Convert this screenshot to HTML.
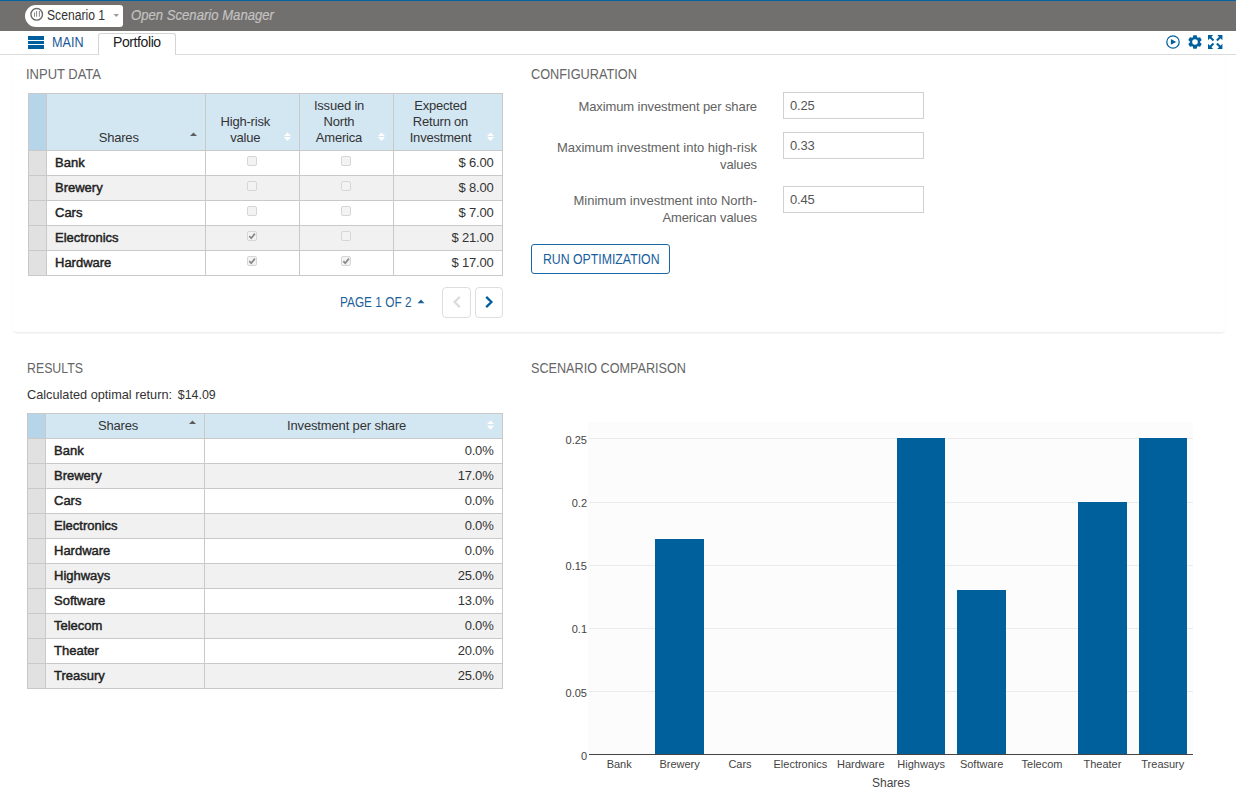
<!DOCTYPE html>
<html><head><meta charset="utf-8">
<style>
*{box-sizing:border-box}
html,body{margin:0;padding:0;width:1236px;height:795px;overflow:hidden;background:#fff;font-family:"Liberation Sans",sans-serif;color:#333}
.a{position:absolute}
.t{position:absolute;white-space:nowrap;line-height:1}
.h2{font-size:13px;color:#666}
.cb{width:10px;height:10px;border:1px solid #d6d6d6;border-radius:2px;background:#f3f3f3}
.b{font-weight:bold}
</style></head><body>

<div class="a" style="left:0px;top:0px;width:1236px;height:1px;background:#0563a2"></div>
<div class="a" style="left:0px;top:1px;width:1236px;height:30px;background:#72706e"></div>
<div class="a" style="left:25px;top:5px;width:98px;height:22px;background:#fff;border-radius:11px 3px 3px 11px"></div>
<svg class="a" style="left:29px;top:7px" width="16" height="15" viewBox="0 0 16 15">
<circle cx="7.7" cy="7.3" r="5.8" fill="none" stroke="#6a6a6a" stroke-width="1.4"/>
<rect x="5" y="5.5" width="1" height="4.2" fill="#8a8a8a"/>
<rect x="7.1" y="4" width="1" height="5.7" fill="#8a8a8a"/>
<rect x="9.9" y="4" width="1" height="5.7" fill="#8a8a8a"/>
</svg>
<div class="t" style="left:46.5px;top:8.05px;font-size:14px;color:#333;;transform:scaleX(0.8665);transform-origin:0 0">Scenario 1</div>
<svg class="a" style="left:113px;top:13px" width="7" height="5"><path d="M0.5 1 L6 1 L3.25 4 Z" fill="#999"/></svg>
<div class="t" style="left:130.5px;top:7.75px;font-size:14px;color:#c2c2c2;font-style:italic;-webkit-text-stroke:0.2px #c2c2c2;transform:scaleX(0.9374);transform-origin:0 0">Open Scenario Manager</div>
<div class="a" style="left:0px;top:54px;width:1236px;height:1px;background:#dcdcdc"></div>
<div class="a" style="left:28px;top:36px;width:16px;height:3.5px;background:#005e9d"></div>
<div class="a" style="left:28px;top:41px;width:16px;height:3.2px;background:#005e9d"></div>
<div class="a" style="left:28px;top:45.4px;width:16px;height:3.3px;background:#005e9d"></div>
<div class="t" style="left:52px;top:34.95px;font-size:14px;color:#1b5a97;;transform:scaleX(0.9000);transform-origin:0 0">MAIN</div>
<div class="a" style="left:98px;top:33px;width:78px;height:22px;background:#fff;border:1px solid #d4d4d4;border-bottom:none;border-radius:3px 3px 0 0"></div>
<div class="t" style="left:113px;top:35.15px;font-size:14px;color:#222;letter-spacing:-0.4px">Portfolio</div>
<svg class="a" style="left:1165.2px;top:33.9px" width="16" height="16" viewBox="0 0 16 16">
<circle cx="8" cy="8" r="6.2" fill="none" stroke="#00609c" stroke-width="1.25"/>
<path d="M5.9 5.1 L11.2 7.95 L5.9 10.8 Z" fill="#00609c"/></svg>
<svg class="a" style="left:1186.9px;top:33.9px" width="16" height="16" viewBox="-8 -8 16 16">
<path fill="#00609c" fill-rule="evenodd" d="M-2.27 -4.46 L-1.69 -6.79 L1.69 -6.79 L2.27 -4.46 L2.72 -4.19 L5.04 -4.86 L6.73 -1.93 L4.99 -0.26 L4.99 0.26 L6.73 1.93 L5.04 4.86 L2.72 4.19 L2.27 4.46 L1.69 6.79 L-1.69 6.79 L-2.27 4.46 L-2.72 4.19 L-5.04 4.86 L-6.73 1.93 L-4.99 0.26 L-4.99 -0.26 L-6.73 -1.93 L-5.04 -4.86 L-2.72 -4.19 Z M0 -2.8 A2.8 2.8 0 1 0 0 2.8 A2.8 2.8 0 1 0 0 -2.8 Z"/></svg>
<svg class="a" style="left:1208.2px;top:34.8px" width="15" height="15" viewBox="0 0 15 15">
<g fill="#00609c"><path d="M0 0 L5.2 0 L0 5.2 Z M14.4 0 L9.2 0 L14.4 5.2 Z M0 14.05 L5.2 14.05 L0 8.85 Z M14.4 14.05 L9.2 14.05 L14.4 8.85 Z"/></g>
<g stroke="#00609c" stroke-width="2.1"><path d="M1.5 1.5 L5.5 5.5 M12.9 1.5 L8.9 5.5 M1.5 12.55 L5.5 8.55 M12.9 12.55 L8.9 8.55"/></g></svg>
<div class="a" style="left:12px;top:55px;width:1214px;height:278px;border:1px solid #fcfcfc;border-top:none;border-bottom:1px solid #efefef;border-radius:0 0 5px 5px;box-shadow:0 1px 1px #f6f6f6"></div>
<div class="t" style="left:26px;top:67.05px;font-size:14px;color:#666;;transform:scaleX(0.9270);transform-origin:0 0">INPUT DATA</div>
<div class="t" style="left:531px;top:66.85px;font-size:14px;color:#666;;transform:scaleX(0.9106);transform-origin:0 0">CONFIGURATION</div>
<div class="t" style="left:26.5px;top:360.75px;font-size:14px;color:#666;;transform:scaleX(0.8812);transform-origin:0 0">RESULTS</div>
<div class="t" style="left:530.7px;top:360.65px;font-size:14px;color:#666;;transform:scaleX(0.9030);transform-origin:0 0">SCENARIO COMPARISON</div>
<div class="a" style="left:29px;top:94px;width:17px;height:56px;background:#b7d5e9"></div>
<div class="a" style="left:47px;top:94px;width:455px;height:56px;background:#d3e7f3"></div>
<div class="a" style="left:29px;top:151px;width:17px;height:24px;background:#e1e1e1"></div>
<div class="a" style="left:47px;top:151px;width:455px;height:24px;background:#fff"></div>
<div class="a" style="left:29px;top:176px;width:17px;height:24px;background:#e1e1e1"></div>
<div class="a" style="left:47px;top:176px;width:455px;height:24px;background:#f1f1f1"></div>
<div class="a" style="left:29px;top:201px;width:17px;height:24px;background:#e1e1e1"></div>
<div class="a" style="left:47px;top:201px;width:455px;height:24px;background:#fff"></div>
<div class="a" style="left:29px;top:226px;width:17px;height:24px;background:#e1e1e1"></div>
<div class="a" style="left:47px;top:226px;width:455px;height:24px;background:#f1f1f1"></div>
<div class="a" style="left:29px;top:251px;width:17px;height:24px;background:#e1e1e1"></div>
<div class="a" style="left:47px;top:251px;width:455px;height:24px;background:#fff"></div>
<div class="a" style="left:28px;top:93px;width:1px;height:183px;background:#c9c9c9"></div>
<div class="a" style="left:46px;top:93px;width:1px;height:183px;background:#c9c9c9"></div>
<div class="a" style="left:205px;top:93px;width:1px;height:183px;background:#c9c9c9"></div>
<div class="a" style="left:299px;top:93px;width:1px;height:183px;background:#c9c9c9"></div>
<div class="a" style="left:393px;top:93px;width:1px;height:183px;background:#c9c9c9"></div>
<div class="a" style="left:502px;top:93px;width:1px;height:183px;background:#c9c9c9"></div>
<div class="a" style="left:28px;top:93px;width:475px;height:1px;background:#c9c9c9"></div>
<div class="a" style="left:28px;top:150px;width:475px;height:1px;background:#c9c9c9"></div>
<div class="a" style="left:28px;top:175px;width:475px;height:1px;background:#c9c9c9"></div>
<div class="a" style="left:28px;top:200px;width:475px;height:1px;background:#c9c9c9"></div>
<div class="a" style="left:28px;top:225px;width:475px;height:1px;background:#c9c9c9"></div>
<div class="a" style="left:28px;top:250px;width:475px;height:1px;background:#c9c9c9"></div>
<div class="a" style="left:28px;top:275px;width:475px;height:1px;background:#c9c9c9"></div>
<div class="t" style="left:-81.3px;width:400px;text-align:center;top:130.80px;font-size:13px;color:#333;letter-spacing:-0.2px">Shares</div>
<svg class="a" style="left:190px;top:132px" width="8" height="5" viewBox="0 0 8 5"><path d="M0 3.9 L3.5 0.6 L7 3.9 Z" fill="#5c5c5c"/></svg>
<div class="t" style="left:45.30000000000001px;width:400px;text-align:center;top:114.90px;font-size:13px;color:#333;letter-spacing:-0.2px">High-risk</div>
<div class="t" style="left:45.30000000000001px;width:400px;text-align:center;top:130.80px;font-size:13px;color:#333;letter-spacing:-0.2px">value</div>
<svg class="a" style="left:284px;top:132px" width="8" height="11" viewBox="0 0 8 11"><path d="M0 3.9 L3.5 0.5 L7 3.9 Z M0 4.9 L3.5 9.0 L7 4.9 Z" fill="#fff"/></svg>
<div class="t" style="left:139px;width:400px;text-align:center;top:99.00px;font-size:13px;color:#333;letter-spacing:-0.2px">Issued in</div>
<div class="t" style="left:139px;width:400px;text-align:center;top:115.00px;font-size:13px;color:#333;letter-spacing:-0.2px">North</div>
<div class="t" style="left:139px;width:400px;text-align:center;top:131.00px;font-size:13px;color:#333;letter-spacing:-0.2px">America</div>
<svg class="a" style="left:378px;top:132px" width="8" height="11" viewBox="0 0 8 11"><path d="M0 3.9 L3.5 0.5 L7 3.9 Z M0 4.9 L3.5 9.0 L7 4.9 Z" fill="#fff"/></svg>
<div class="t" style="left:240.5px;width:400px;text-align:center;top:98.80px;font-size:13px;color:#333;letter-spacing:-0.2px">Expected</div>
<div class="t" style="left:240.5px;width:400px;text-align:center;top:114.80px;font-size:13px;color:#333;letter-spacing:-0.2px">Return on</div>
<div class="t" style="left:240.5px;width:400px;text-align:center;top:130.80px;font-size:13px;color:#333;letter-spacing:-0.2px">Investment</div>
<svg class="a" style="left:487px;top:132px" width="8" height="11" viewBox="0 0 8 11"><path d="M0 3.9 L3.5 0.5 L7 3.9 Z M0 4.9 L3.5 9.0 L7 4.9 Z" fill="#fff"/></svg>
<div class="t" style="left:55px;top:155.80px;font-size:13px;color:#222;-webkit-text-stroke:0.45px #222">Bank</div>
<div class="a cb" style="left:247px;top:156px"></div>
<div class="a cb" style="left:341px;top:156px"></div>
<div class="t" style="right:742.5px;top:155.70px;font-size:13px;color:#333;letter-spacing:-0.2px">$ 6.00</div>
<div class="t" style="left:55px;top:180.80px;font-size:13px;color:#222;-webkit-text-stroke:0.45px #222">Brewery</div>
<div class="a cb" style="left:247px;top:181px"></div>
<div class="a cb" style="left:341px;top:181px"></div>
<div class="t" style="right:742.5px;top:180.70px;font-size:13px;color:#333;letter-spacing:-0.2px">$ 8.00</div>
<div class="t" style="left:55px;top:205.80px;font-size:13px;color:#222;-webkit-text-stroke:0.45px #222">Cars</div>
<div class="a cb" style="left:247px;top:206px"></div>
<div class="a cb" style="left:341px;top:206px"></div>
<div class="t" style="right:742.5px;top:205.70px;font-size:13px;color:#333;letter-spacing:-0.2px">$ 7.00</div>
<div class="t" style="left:55px;top:230.80px;font-size:13px;color:#222;-webkit-text-stroke:0.45px #222">Electronics</div>
<div class="a cb" style="left:247px;top:231px"></div>
<svg class="a" style="left:247px;top:231px" width="10" height="10" viewBox="0 0 10 10"><path d="M2.3 5.2 L4.2 7.2 L7.9 2.6" fill="none" stroke="#8a8a8a" stroke-width="1.7"/></svg>
<div class="a cb" style="left:341px;top:231px"></div>
<div class="t" style="right:742.5px;top:230.70px;font-size:13px;color:#333;letter-spacing:-0.2px">$ 21.00</div>
<div class="t" style="left:55px;top:255.80px;font-size:13px;color:#222;-webkit-text-stroke:0.45px #222">Hardware</div>
<div class="a cb" style="left:247px;top:256px"></div>
<svg class="a" style="left:247px;top:256px" width="10" height="10" viewBox="0 0 10 10"><path d="M2.3 5.2 L4.2 7.2 L7.9 2.6" fill="none" stroke="#8a8a8a" stroke-width="1.7"/></svg>
<div class="a cb" style="left:341px;top:256px"></div>
<svg class="a" style="left:341px;top:256px" width="10" height="10" viewBox="0 0 10 10"><path d="M2.3 5.2 L4.2 7.2 L7.9 2.6" fill="none" stroke="#8a8a8a" stroke-width="1.7"/></svg>
<div class="t" style="right:742.5px;top:255.70px;font-size:13px;color:#333;letter-spacing:-0.2px">$ 17.00</div>
<div class="t" style="left:340.3px;top:295.05px;font-size:14px;color:#1d5f99;;transform:scaleX(0.8457);transform-origin:0 0">PAGE 1 OF 2</div>
<svg class="a" style="left:417px;top:299px" width="8" height="5" viewBox="0 0 8 5"><path d="M0.5 4.3 L4 0.5 L7.5 4.3 Z" fill="#1d5f99"/></svg>
<div class="a" style="left:442px;top:287px;width:29px;height:31px;border:1px solid #dedede;border-radius:4px"></div>
<div class="a" style="left:475px;top:287px;width:28px;height:31px;border:1px solid #dedede;border-radius:4px"></div>
<svg class="a" style="left:452px;top:296px" width="10" height="12" viewBox="0 0 10 12"><path d="M7.8 0.9 L2.6 6 L7.8 11.1" fill="none" stroke="#dcdcdc" stroke-width="2.3"/></svg>
<svg class="a" style="left:484px;top:296px" width="10" height="12" viewBox="0 0 10 12"><path d="M2.2 0.9 L7.4 6 L2.2 11.1" fill="none" stroke="#005e9e" stroke-width="2.3"/></svg>
<div class="t" style="right:479px;top:100.00px;font-size:13px;color:#626262;letter-spacing:-0.1px">Maximum investment per share</div>
<div class="t" style="right:479px;top:140.50px;font-size:13px;color:#626262;letter-spacing:0px">Maximum investment into high-risk</div>
<div class="t" style="right:479px;top:157.50px;font-size:13px;color:#626262;letter-spacing:-0.1px">values</div>
<div class="t" style="right:479px;top:194.30px;font-size:13px;color:#626262;letter-spacing:0px">Minimum investment into North-</div>
<div class="t" style="right:479px;top:211.00px;font-size:13px;color:#626262;letter-spacing:-0.1px">American values</div>
<div class="a" style="left:783px;top:92px;width:141px;height:27px;border:1px solid #d0d0d0;background:#fff"></div>
<div class="t" style="left:790px;top:99.20px;font-size:13px;color:#555;letter-spacing:-0.2px">0.25</div>
<div class="a" style="left:783px;top:132px;width:141px;height:27px;border:1px solid #d0d0d0;background:#fff"></div>
<div class="t" style="left:790px;top:139.20px;font-size:13px;color:#555;letter-spacing:-0.2px">0.33</div>
<div class="a" style="left:783px;top:186px;width:141px;height:27px;border:1px solid #d0d0d0;background:#fff"></div>
<div class="t" style="left:790px;top:193.20px;font-size:13px;color:#555;letter-spacing:-0.2px">0.45</div>
<div class="a" style="left:531px;top:244px;width:139px;height:30px;border:1px solid #1a69a6;border-radius:3px"></div>
<div class="t" style="left:542.6px;top:252.15px;font-size:14px;color:#185e9c;;transform:scaleX(0.8777);transform-origin:0 0">RUN OPTIMIZATION</div>
<div class="t" style="left:26.5px;top:387.80px;font-size:13px;color:#333;;transform:scaleX(0.9788);transform-origin:0 0">Calculated optimal return:</div>
<div class="t" style="right:1020px;top:387.80px;font-size:13px;color:#333;;transform:scaleX(0.9556);transform-origin:100% 0">$14.09</div>
<div class="a" style="left:28px;top:414px;width:17px;height:24px;background:#b7d5e9"></div>
<div class="a" style="left:46px;top:414px;width:456px;height:24px;background:#d3e7f3"></div>
<div class="a" style="left:28px;top:439px;width:17px;height:24px;background:#e1e1e1"></div>
<div class="a" style="left:46px;top:439px;width:456px;height:24px;background:#fff"></div>
<div class="a" style="left:28px;top:464px;width:17px;height:24px;background:#e1e1e1"></div>
<div class="a" style="left:46px;top:464px;width:456px;height:24px;background:#f1f1f1"></div>
<div class="a" style="left:28px;top:489px;width:17px;height:24px;background:#e1e1e1"></div>
<div class="a" style="left:46px;top:489px;width:456px;height:24px;background:#fff"></div>
<div class="a" style="left:28px;top:514px;width:17px;height:24px;background:#e1e1e1"></div>
<div class="a" style="left:46px;top:514px;width:456px;height:24px;background:#f1f1f1"></div>
<div class="a" style="left:28px;top:539px;width:17px;height:24px;background:#e1e1e1"></div>
<div class="a" style="left:46px;top:539px;width:456px;height:24px;background:#fff"></div>
<div class="a" style="left:28px;top:564px;width:17px;height:24px;background:#e1e1e1"></div>
<div class="a" style="left:46px;top:564px;width:456px;height:24px;background:#f1f1f1"></div>
<div class="a" style="left:28px;top:589px;width:17px;height:24px;background:#e1e1e1"></div>
<div class="a" style="left:46px;top:589px;width:456px;height:24px;background:#fff"></div>
<div class="a" style="left:28px;top:614px;width:17px;height:24px;background:#e1e1e1"></div>
<div class="a" style="left:46px;top:614px;width:456px;height:24px;background:#f1f1f1"></div>
<div class="a" style="left:28px;top:639px;width:17px;height:24px;background:#e1e1e1"></div>
<div class="a" style="left:46px;top:639px;width:456px;height:24px;background:#fff"></div>
<div class="a" style="left:28px;top:664px;width:17px;height:24px;background:#e1e1e1"></div>
<div class="a" style="left:46px;top:664px;width:456px;height:24px;background:#f1f1f1"></div>
<div class="a" style="left:27px;top:413px;width:1px;height:276px;background:#c9c9c9"></div>
<div class="a" style="left:45px;top:413px;width:1px;height:276px;background:#c9c9c9"></div>
<div class="a" style="left:204px;top:413px;width:1px;height:276px;background:#c9c9c9"></div>
<div class="a" style="left:502px;top:413px;width:1px;height:276px;background:#c9c9c9"></div>
<div class="a" style="left:27px;top:413px;width:476px;height:1px;background:#c9c9c9"></div>
<div class="a" style="left:27px;top:438px;width:476px;height:1px;background:#c9c9c9"></div>
<div class="a" style="left:27px;top:463px;width:476px;height:1px;background:#c9c9c9"></div>
<div class="a" style="left:27px;top:488px;width:476px;height:1px;background:#c9c9c9"></div>
<div class="a" style="left:27px;top:513px;width:476px;height:1px;background:#c9c9c9"></div>
<div class="a" style="left:27px;top:538px;width:476px;height:1px;background:#c9c9c9"></div>
<div class="a" style="left:27px;top:563px;width:476px;height:1px;background:#c9c9c9"></div>
<div class="a" style="left:27px;top:588px;width:476px;height:1px;background:#c9c9c9"></div>
<div class="a" style="left:27px;top:613px;width:476px;height:1px;background:#c9c9c9"></div>
<div class="a" style="left:27px;top:638px;width:476px;height:1px;background:#c9c9c9"></div>
<div class="a" style="left:27px;top:663px;width:476px;height:1px;background:#c9c9c9"></div>
<div class="a" style="left:27px;top:688px;width:476px;height:1px;background:#c9c9c9"></div>
<div class="t" style="left:-82px;width:400px;text-align:center;top:418.80px;font-size:13px;color:#333;letter-spacing:-0.2px">Shares</div>
<svg class="a" style="left:189px;top:420px" width="8" height="5" viewBox="0 0 8 5"><path d="M0 3.9 L3.5 0.6 L7 3.9 Z" fill="#5c5c5c"/></svg>
<div class="t" style="left:146.60000000000002px;width:400px;text-align:center;top:418.80px;font-size:13px;color:#333;letter-spacing:-0.15px">Investment per share</div>
<svg class="a" style="left:487px;top:420px" width="8" height="11" viewBox="0 0 8 11"><path d="M0 3.9 L3.5 0.5 L7 3.9 Z M0 5.7 L3.5 9.8 L7 5.7 Z" fill="#fff"/></svg>
<div class="t" style="left:54px;top:443.60px;font-size:13px;color:#222;-webkit-text-stroke:0.45px #222">Bank</div>
<div class="t" style="right:742.5px;top:443.50px;font-size:13px;color:#333;letter-spacing:-0.2px">0.0%</div>
<div class="t" style="left:54px;top:468.60px;font-size:13px;color:#222;-webkit-text-stroke:0.45px #222">Brewery</div>
<div class="t" style="right:742.5px;top:468.50px;font-size:13px;color:#333;letter-spacing:-0.2px">17.0%</div>
<div class="t" style="left:54px;top:493.60px;font-size:13px;color:#222;-webkit-text-stroke:0.45px #222">Cars</div>
<div class="t" style="right:742.5px;top:493.50px;font-size:13px;color:#333;letter-spacing:-0.2px">0.0%</div>
<div class="t" style="left:54px;top:518.60px;font-size:13px;color:#222;-webkit-text-stroke:0.45px #222">Electronics</div>
<div class="t" style="right:742.5px;top:518.50px;font-size:13px;color:#333;letter-spacing:-0.2px">0.0%</div>
<div class="t" style="left:54px;top:543.60px;font-size:13px;color:#222;-webkit-text-stroke:0.45px #222">Hardware</div>
<div class="t" style="right:742.5px;top:543.50px;font-size:13px;color:#333;letter-spacing:-0.2px">0.0%</div>
<div class="t" style="left:54px;top:568.60px;font-size:13px;color:#222;-webkit-text-stroke:0.45px #222">Highways</div>
<div class="t" style="right:742.5px;top:568.50px;font-size:13px;color:#333;letter-spacing:-0.2px">25.0%</div>
<div class="t" style="left:54px;top:593.60px;font-size:13px;color:#222;-webkit-text-stroke:0.45px #222">Software</div>
<div class="t" style="right:742.5px;top:593.50px;font-size:13px;color:#333;letter-spacing:-0.2px">13.0%</div>
<div class="t" style="left:54px;top:618.60px;font-size:13px;color:#222;-webkit-text-stroke:0.45px #222">Telecom</div>
<div class="t" style="right:742.5px;top:618.50px;font-size:13px;color:#333;letter-spacing:-0.2px">0.0%</div>
<div class="t" style="left:54px;top:643.60px;font-size:13px;color:#222;-webkit-text-stroke:0.45px #222">Theater</div>
<div class="t" style="right:742.5px;top:643.50px;font-size:13px;color:#333;letter-spacing:-0.2px">20.0%</div>
<div class="t" style="left:54px;top:668.60px;font-size:13px;color:#222;-webkit-text-stroke:0.45px #222">Treasury</div>
<div class="t" style="right:742.5px;top:668.50px;font-size:13px;color:#333;letter-spacing:-0.2px">25.0%</div>
<div class="a" style="left:588px;top:422px;width:605px;height:332px;background:#fcfcfc"></div>
<div class="a" style="left:589px;top:691px;width:604px;height:1px;background:#ebebeb"></div>
<div class="a" style="left:589px;top:628px;width:604px;height:1px;background:#ebebeb"></div>
<div class="a" style="left:589px;top:565px;width:604px;height:1px;background:#ebebeb"></div>
<div class="a" style="left:589px;top:502px;width:604px;height:1px;background:#ebebeb"></div>
<div class="a" style="left:589px;top:438px;width:604px;height:1px;background:#ebebeb"></div>
<div class="t" style="right:649px;top:750.69px;font-size:11px;color:#444;">0</div>
<div class="t" style="right:649px;top:687.57px;font-size:11px;color:#444;">0.05</div>
<div class="t" style="right:649px;top:624.45px;font-size:11px;color:#444;">0.1</div>
<div class="t" style="right:649px;top:561.33px;font-size:11px;color:#444;">0.15</div>
<div class="t" style="right:649px;top:498.21px;font-size:11px;color:#444;">0.2</div>
<div class="t" style="right:649px;top:435.09px;font-size:11px;color:#444;">0.25</div>
<div class="t" style="left:419.20000000000005px;width:400px;text-align:center;top:758.99px;font-size:11px;color:#444;">Bank</div>
<div class="a" style="left:655.40px;top:539.39px;width:48.4px;height:214.61px;background:#00609c"></div>
<div class="t" style="left:479.6px;width:400px;text-align:center;top:758.99px;font-size:11px;color:#444;">Brewery</div>
<div class="t" style="left:540.0px;width:400px;text-align:center;top:758.99px;font-size:11px;color:#444;">Cars</div>
<div class="t" style="left:600.4px;width:400px;text-align:center;top:758.99px;font-size:11px;color:#444;">Electronics</div>
<div class="t" style="left:660.8px;width:400px;text-align:center;top:758.99px;font-size:11px;color:#444;">Hardware</div>
<div class="a" style="left:897.00px;top:438.40px;width:48.4px;height:315.60px;background:#00609c"></div>
<div class="t" style="left:721.2px;width:400px;text-align:center;top:758.99px;font-size:11px;color:#444;">Highways</div>
<div class="a" style="left:957.40px;top:589.89px;width:48.4px;height:164.11px;background:#00609c"></div>
<div class="t" style="left:781.5999999999999px;width:400px;text-align:center;top:758.99px;font-size:11px;color:#444;">Software</div>
<div class="t" style="left:842.0px;width:400px;text-align:center;top:758.99px;font-size:11px;color:#444;">Telecom</div>
<div class="a" style="left:1078.20px;top:501.52px;width:48.4px;height:252.48px;background:#00609c"></div>
<div class="t" style="left:902.4000000000001px;width:400px;text-align:center;top:758.99px;font-size:11px;color:#444;">Theater</div>
<div class="a" style="left:1138.60px;top:438.40px;width:48.4px;height:315.60px;background:#00609c"></div>
<div class="t" style="left:962.8px;width:400px;text-align:center;top:758.99px;font-size:11px;color:#444;">Treasury</div>
<div class="a" style="left:589px;top:754px;width:604px;height:1px;background:#444"></div>
<div class="t" style="left:691px;width:400px;text-align:center;top:776.64px;font-size:12px;color:#444;">Shares</div>
</body></html>
